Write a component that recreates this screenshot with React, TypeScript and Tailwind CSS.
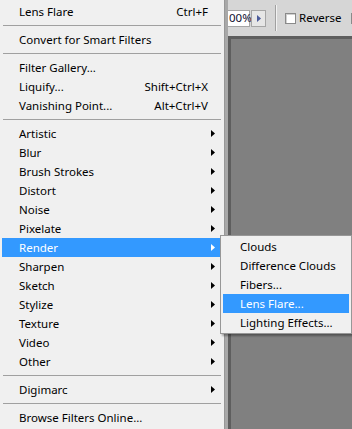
import React from 'react';

const font = { fontFamily: '"Noto Sans", "Liberation Sans", sans-serif' };

type Item =
  | { kind: 'sep' }
  | { kind: 'item'; label: string; shortcut?: string; sub?: boolean; active?: boolean };

const items: Item[] = [
  { kind: 'item', label: 'Lens Flare', shortcut: 'Ctrl+F' },
  { kind: 'sep' },
  { kind: 'item', label: 'Convert for Smart Filters' },
  { kind: 'sep' },
  { kind: 'item', label: 'Filter Gallery...' },
  { kind: 'item', label: 'Liquify...', shortcut: 'Shift+Ctrl+X' },
  { kind: 'item', label: 'Vanishing Point...', shortcut: 'Alt+Ctrl+V' },
  { kind: 'sep' },
  { kind: 'item', label: 'Artistic', sub: true },
  { kind: 'item', label: 'Blur', sub: true },
  { kind: 'item', label: 'Brush Strokes', sub: true },
  { kind: 'item', label: 'Distort', sub: true },
  { kind: 'item', label: 'Noise', sub: true },
  { kind: 'item', label: 'Pixelate', sub: true },
  { kind: 'item', label: 'Render', sub: true, active: true },
  { kind: 'item', label: 'Sharpen', sub: true },
  { kind: 'item', label: 'Sketch', sub: true },
  { kind: 'item', label: 'Stylize', sub: true },
  { kind: 'item', label: 'Texture', sub: true },
  { kind: 'item', label: 'Video', sub: true },
  { kind: 'item', label: 'Other', sub: true },
  { kind: 'sep' },
  { kind: 'item', label: 'Digimarc', sub: true },
  { kind: 'sep' },
  { kind: 'item', label: 'Browse Filters Online...' },
];

const subItems = ['Clouds', 'Difference Clouds', 'Fibers...', 'Lens Flare...', 'Lighting Effects...'];

function Arrow({ white }: { white?: boolean }) {
  return (
    <svg width="4" height="7" viewBox="0 0 4 7" className="shrink-0">
      <path d="M0 0 L4 3.5 L0 7 Z" fill={white ? '#ffffff' : '#000000'} />
    </svg>
  );
}

function Separator() {
  return (
    <div className="h-[9px] pt-[4px] px-[3px]">
      <div className="h-px bg-[#a0a0a0]" />
    </div>
  );
}

export default function App() {
  return (
    <div className="relative w-[352px] h-[429px] overflow-hidden flex bg-[#808080] text-[11.5px] leading-none" style={font}>
      {/* 필터 메뉴 */}
      <div className="w-[225px] shrink-0 bg-[#f0f0f0] pt-[2px] border-r border-[#979797]">
        {items.map((it, i) =>
          it.kind === 'sep' ? (
            <Separator key={i} />
          ) : (
            <div
              key={i}
              className={`h-[19px] ml-[2px] mr-[4px] flex items-center pl-[17px] pr-[5px] ${
                it.active ? 'bg-[#3399ff] text-white' : 'text-black'
              }`}
            >
              <span className="flex-1">{it.label}</span>
              {it.shortcut && <span className="pr-[7px]">{it.shortcut}</span>}
              {it.sub && <Arrow white={it.active} />}
            </div>
          )
        )}
      </div>

      <div className="w-[3px] shrink-0 bg-[#a8a8a8]" />

      {/* 오른쪽 작업 영역 */}
      <div className="flex-1 flex flex-col min-w-0">
        <div className="h-[36px] bg-[#d6d6d6] flex items-center shrink-0">
          <div className="h-[17px] w-[22px] shrink-0 bg-white border-y border-r border-[#a5a5a5] flex items-center text-[#101030]">
            <span className="ml-[1px]">00%</span>
          </div>
          <div className="h-[17px] w-[15px] shrink-0 bg-[#e6e6e6] border border-[#a5a5a5] flex items-center justify-center ml-px">
            <svg width="4" height="7" viewBox="0 0 4 7">
              <path d="M0 0 L4 3.5 L0 7 Z" fill="#4a5a9a" />
            </svg>
          </div>
          <div className="ml-[9px] h-[26px] w-[2px] shrink-0 flex">
            <div className="w-px bg-[#a0a0a0]" />
            <div className="w-px bg-[#f2f2f2]" />
          </div>
          <div className="ml-[8px] w-[11px] h-[11px] shrink-0 bg-white border border-[#8a8a8a] shadow-[inset_1px_1px_0_#d0d0d0]" />
          <span className="ml-[3px] shrink-0 text-black">Reverse</span>
          <div className="ml-[10px] w-[11px] h-[11px] bg-white border border-[#8a8a8a] flex items-center justify-center shrink-0">
            <svg width="9" height="9" viewBox="0 0 9 9">
              <path d="M1 4.5 L3.5 7 L8 1.5" stroke="#3050a0" strokeWidth="1.5" fill="none" />
            </svg>
          </div>
        </div>
        <div className="flex-1 bg-[#808080] border-t-[3px] border-l-[3px] border-[#5e5e5e]" />
      </div>

      {/* 렌더 하위 메뉴 */}
      <div className="absolute left-[220px] top-[235px] w-[132px] bg-[#f0f0f0] border border-[#979797] py-[1px] shadow-[2px_2px_2px_rgba(0,0,0,0.35)]">
        {subItems.map((s) => (
          <div
            key={s}
            className={`h-[19px] mx-[2px] flex items-center pl-[17px] ${
              s === 'Lens Flare...' ? 'bg-[#3399ff] text-white' : 'text-black'
            }`}
          >
            {s}
          </div>
        ))}
      </div>
    </div>
  );
}
